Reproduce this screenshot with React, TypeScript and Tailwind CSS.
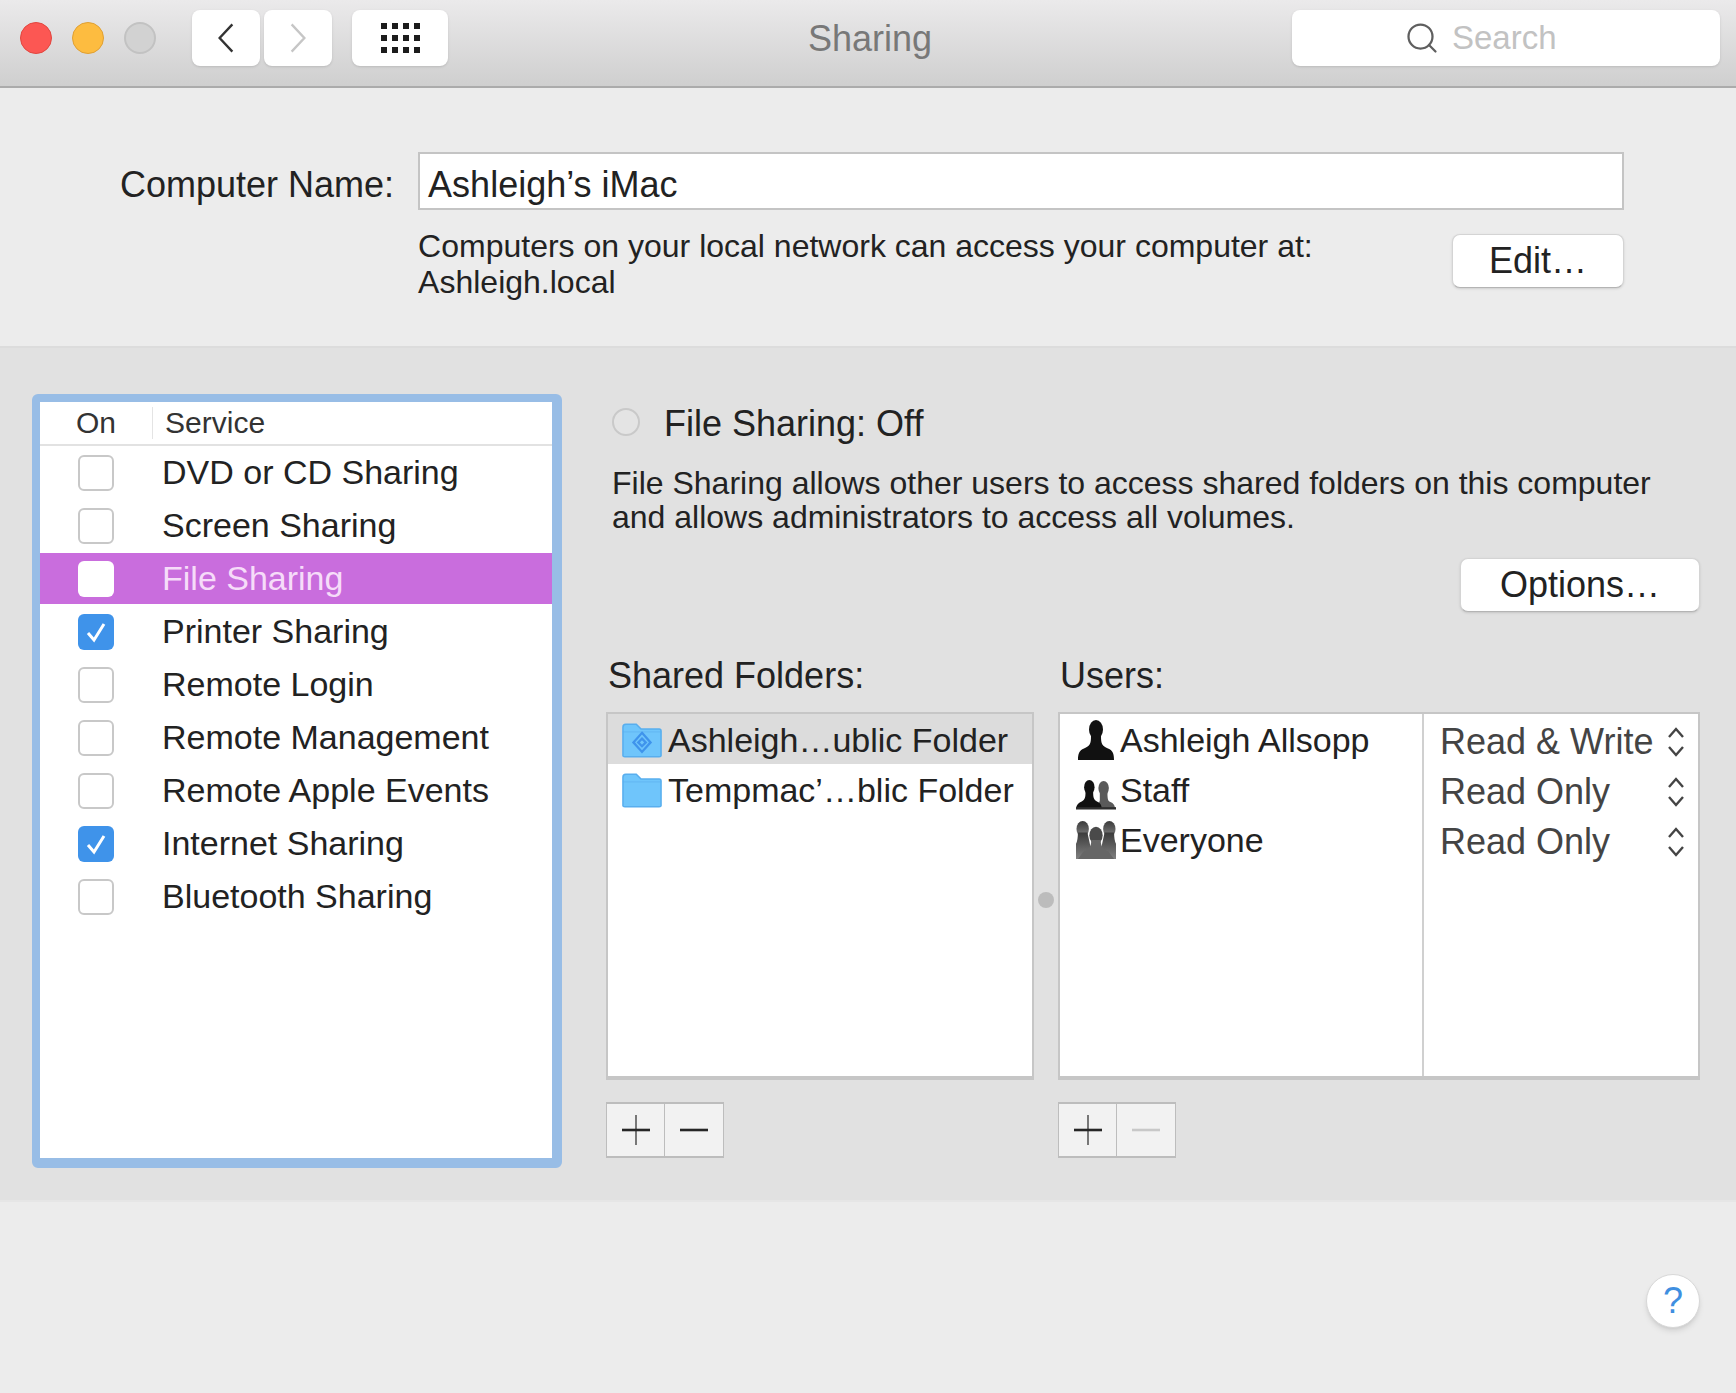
import { Search } from 'lucide-react'

const services = [
  { name: 'DVD or CD Sharing', on: false },
  { name: 'Screen Sharing', on: false },
  { name: 'File Sharing', on: false, selected: true },
  { name: 'Printer Sharing', on: true },
  { name: 'Remote Login', on: false },
  { name: 'Remote Management', on: false },
  { name: 'Remote Apple Events', on: false },
  { name: 'Internet Sharing', on: true },
  { name: 'Bluetooth Sharing', on: false },
]

function Chevron({ dir }: { dir: 'left' | 'right' }) {
  return (
    <svg viewBox="0 0 22 34" className={`h-8 w-5 ${dir === 'left' ? 'text-[#333333]' : 'text-[#c6c6c6]'}`} fill="none" stroke="currentColor" strokeWidth="2.6">
      <polyline points={dir === 'left' ? '18,2 4,17 18,32' : '4,2 18,17 4,32'} />
    </svg>
  )
}

function GridIcon() {
  return (
    <div className="grid grid-cols-4 gap-x-[5px] gap-y-1.5">
      {Array.from({ length: 12 }).map((_, i) => (
        <div key={i} className="size-1.5 bg-[#1c1c1c]" />
      ))}
    </div>
  )
}

function Folder({ shared }: { shared?: boolean }) {
  return (
    <svg viewBox="0 0 42 37" className="h-9 w-10 shrink-0">
      <path d="M1 5 Q1 2 4 2 H15 L20 7 H39 Q41 7 41 9 V35 Q41 36 39 36 H3 Q1 36 1 35 Z" fill="#6fc5fb" stroke="#58aeee" strokeWidth="1.6" />
      <path d="M1 10 H41" stroke="#58aeee" strokeWidth="1" opacity="0.6" />
      {shared && (
        <g fill="none" stroke="#3f94ec" strokeWidth="2.4">
          <path d="M21 11 L30 21 L21 31 L12 21 Z" />
          <path d="M21 17 L25 21 L21 25 L17 21 Z" />
        </g>
      )}
    </svg>
  )
}

function PersonIcon() {
  return (
    <svg viewBox="0 0 40 40" className="size-10 shrink-0" fill="#111111">
      <ellipse cx="20" cy="9.5" rx="7" ry="9.5" />
      <path d="M15 16 C15 24 14 26 8 28.5 C3 30.5 2 34 2 40 H38 C38 34 37 30.5 32 28.5 C26 26 25 24 25 16 Z" />
    </svg>
  )
}

function StaffIcon() {
  return (
    <svg viewBox="0 -3 42 40" className="size-10 shrink-0">
      <g fill="#5a5a5a">
        <ellipse cx="29" cy="15" rx="5.5" ry="7.5" />
        <path d="M25 18 V28 L22 37 H41 C41 32 38 30 35 29 C33.5 28 33 26 33 18 Z" />
      </g>
      <g fill="#111111">
        <ellipse cx="14" cy="14" rx="5.5" ry="7.5" />
        <path d="M10 18 C10 25 9.5 27 6 29 C3 30.5 0.5 32 0 37 H27 C27 32 25 30.5 22 29 C18.5 27 18 25 18 18 Z" />
      </g>
      <rect y="35" width="42" height="2.5" fill="#2e2e2e" />
    </svg>
  )
}

function EveryoneIcon() {
  return (
    <svg viewBox="0 0 42 40" className="size-10 shrink-0">
      <defs>
        <linearGradient id="everyone" x1="0" y1="0" x2="0" y2="1">
          <stop offset="0" stopColor="#3a3a3a" />
          <stop offset="1" stopColor="#808080" />
        </linearGradient>
      </defs>
      <g fill="url(#everyone)">
        <ellipse cx="7" cy="8.5" rx="6.5" ry="8.5" />
        <ellipse cx="35" cy="8.5" rx="6.5" ry="8.5" />
        <path d="M2 12 H12 L15 26 V40 H0 V24 Q2 20 2 12 Z" />
        <path d="M30 12 H40 Q40 20 42 24 V40 H27 V26 Z" />
      </g>
      <ellipse cx="21" cy="15" rx="7" ry="9" fill="#4a4a4a" />
      <path d="M16 20 C16 27 14 29 8 32 L2 40 H40 L34 32 C28 29 26 27 26 20 Z" fill="#666666" />
    </svg>
  )
}

function Updown() {
  return (
    <svg viewBox="0 0 20 32" className="h-8 w-5 text-[#444444]" fill="none" stroke="currentColor" strokeWidth="2.4">
      <polyline points="3,11 10,3 17,11" />
      <polyline points="3,21 10,29 17,21" />
    </svg>
  )
}

function PlusMinus({ minusDisabled }: { minusDisabled?: boolean }) {
  return (
    <div className="flex h-14 w-fit border-x border-y-2 border-[#bdbdbd] bg-[#f2f2f2]">
      <div className="flex w-14.5 items-center justify-center border-r border-[#bdbdbd]">
        <svg viewBox="0 0 30 32" className="h-8 w-7.5" stroke="#262626">
          <path d="M15 1 V31" strokeWidth="1.2" />
          <path d="M1 16 H29" strokeWidth="2.6" />
        </svg>
      </div>
      <div className="flex w-14.5 items-center justify-center">
        <svg viewBox="0 0 30 32" className="h-8 w-7.5" stroke={minusDisabled ? '#c8c8c8' : '#262626'}>
          <path d="M1 16 H29" strokeWidth="2.6" />
        </svg>
      </div>
    </div>
  )
}

function PushButton({ children, className }: { children: string; className: string }) {
  return (
    <div className={`flex h-13.5 items-center justify-center rounded-lg border border-[#d4d4d4] border-b-[#b4b4b4] bg-white text-4xl text-[#222222] shadow-sm ${className}`}>
      {children}
    </div>
  )
}

export default function App() {
  return (
    <div className="flex h-screen flex-col overflow-hidden bg-[#ececec] font-['Liberation_Sans',Arial,sans-serif] text-[#222222]">
      <div className="flex h-22 shrink-0 items-start border-b-2 border-[#ababab] bg-gradient-to-b from-[#ebeaeb] to-[#cfcfcf] pt-2.5 pl-5 pr-4">
        <div className="flex h-14 items-center gap-5">
          <div className="size-8 rounded-full border border-[#e2463f] bg-[#fc5753]" />
          <div className="size-8 rounded-full border border-[#e0a033] bg-[#fdbc40]" />
          <div className="size-8 rounded-full border-2 border-[#c2c2c2] bg-[#d2d2d2]" />
        </div>
        <div className="ml-9 flex gap-1">
          <div className="flex h-14 w-17 items-center justify-center rounded-lg bg-white shadow-sm">
            <Chevron dir="left" />
          </div>
          <div className="flex h-14 w-17 items-center justify-center rounded-lg bg-white shadow-sm">
            <Chevron dir="right" />
          </div>
        </div>
        <div className="ml-5 flex h-14 w-24 items-center justify-center rounded-lg bg-white shadow-sm">
          <GridIcon />
        </div>
        <div className="flex h-14 flex-1 items-center justify-center pt-0.5 text-4xl text-[#787878]">Sharing</div>
        <div className="flex h-14 w-107 items-center gap-3 rounded-lg bg-white pl-28 shadow-sm">
          <Search className="size-9 text-[#5f5f5f]" strokeWidth={1.5} />
          <span className="text-[33px] text-[#c2c2c2]">Search</span>
        </div>
      </div>

      <div className="shrink-0 border-b-2 border-[#dcdcdc] pt-16 pr-28 pb-11.5 pl-30">
        <div className="grid grid-cols-[auto_1fr] gap-x-6">
          <div className="self-center pt-2 text-4xl">Computer Name:</div>
          <div className="flex h-14.5 items-center border-2 border-[#c4c4c4] bg-white px-2 pt-2 text-4xl">Ashleigh’s iMac</div>
          <div className="col-start-2 mt-4.5 flex justify-between">
            <div className="text-[32px] leading-9">
              Computers on your local network can access your computer at:
              <br />
              Ashleigh.local
            </div>
            <PushButton className="mt-1.5 w-43">Edit…</PushButton>
          </div>
        </div>
      </div>

      <div className="flex shrink-0 gap-10 border-b-2 border-[#e6e6e6] bg-[#e1e1e1] pt-11.5 pr-9 pb-8 pl-8">
        <div className="h-[774px] w-[530px] shrink-0 rounded-md border-8 border-r-10 border-b-10 border-[#98bde6] bg-white">
          <div className="flex h-11 items-center border-b-2 border-[#e2e2e2] pl-9 text-3xl text-[#333333]">
            <span>On</span>
            <div className="ml-9 h-8 w-px bg-[#e4e4e4]" />
            <span className="ml-3">Service</span>
          </div>
          {services.map((s) => (
            <div key={s.name} className="h-[53px] py-px">
              <div className={`flex h-full items-center gap-12 pl-9.5 text-[34px] ${s.selected ? 'bg-[#c96ddd] text-[#f6dcf9]' : ''}`}>
                {s.on ? (
                  <div className="flex size-9 items-center justify-center rounded-md bg-[#3f93ea]">
                    <svg viewBox="0 0 24 24" className="size-6" fill="none" stroke="white" strokeWidth="3">
                      <path d="M4 13 L10 20 L20 4" />
                    </svg>
                  </div>
                ) : (
                  <div className={`size-9 rounded-md bg-white ${s.selected ? '' : 'border-2 border-[#c8c8c8]'}`} />
                )}
                <span>{s.name}</span>
              </div>
            </div>
          ))}
        </div>

        <div className="flex min-w-0 flex-1 flex-col pl-1">
          <div className="flex h-14 items-center gap-6 pl-1.5 text-4xl">
            <div className="size-7 rounded-full border-2 border-[#c9c9c9] bg-[#e4e4e4]" />
            <span className="pt-1">File Sharing: Off</span>
          </div>
          <div className="mt-4 pl-1.5 text-[32px] leading-8.5">
            File Sharing allows other users to access shared folders on this computer
            <br />
            and allows administrators to access all volumes.
          </div>
          <PushButton className="mt-6 w-60 self-end">Options…</PushButton>

          <div className="mt-11 grid grid-cols-[428px_24px_1fr]">
            <div className="pl-0.5 text-4xl">Shared Folders:</div>
            <div />
            <div className="pl-0.5 text-4xl">Users:</div>

            <div className="mt-4 h-92 border-x-2 border-t-2 border-b-4 border-[#c6c6c6] bg-white text-[34px]">
              <div className="flex h-12.5 items-center gap-1.5 bg-[#dcdcdc] pt-0.5 pl-3.5">
                <Folder shared />
                <span>Ashleigh…ublic Folder</span>
              </div>
              <div className="flex h-12.5 items-center gap-1.5 pt-0.5 pl-3.5">
                <Folder />
                <span>Tempmac’…blic Folder</span>
              </div>
            </div>
            <div className="mt-4 flex items-center justify-center pt-2">
              <div className="size-4 rounded-full bg-[#bcbcbc]" />
            </div>
            <div className="mt-4 flex h-92 border-x-2 border-t-2 border-b-4 border-[#c6c6c6] bg-white">
              <div className="w-91 border-r-2 border-[#d0d0d0] text-[34px]">
                <div className="flex h-12.5 items-center gap-1 pt-0.5 pl-4">
                  <PersonIcon />
                  <span>Ashleigh Allsopp</span>
                </div>
                <div className="flex h-12.5 items-center gap-1 pt-0.5 pl-4">
                  <StaffIcon />
                  <span>Staff</span>
                </div>
                <div className="flex h-12.5 items-center gap-1 pt-0.5 pl-4">
                  <EveryoneIcon />
                  <span>Everyone</span>
                </div>
              </div>
              <div className="flex-1 text-4xl text-[#444444]">
                <div className="flex h-12.5 items-center justify-between pt-1.5 pr-3 pl-4">
                  <span>Read &amp; Write</span>
                  <Updown />
                </div>
                <div className="flex h-12.5 items-center justify-between pt-1.5 pr-3 pl-4">
                  <span>Read Only</span>
                  <Updown />
                </div>
                <div className="flex h-12.5 items-center justify-between pt-1.5 pr-3 pl-4">
                  <span>Read Only</span>
                  <Updown />
                </div>
              </div>
            </div>

            <div className="mt-5.5">
              <PlusMinus />
            </div>
            <div />
            <div className="mt-5.5">
              <PlusMinus minusDisabled />
            </div>
          </div>
        </div>
      </div>

      <div className="flex flex-1 items-start justify-end pt-18 pr-9">
        <div className="flex size-13.5 items-center justify-center rounded-full border border-[#d8d8d8] bg-white text-4xl text-[#3f8fe0] shadow-md">
          ?
        </div>
      </div>
    </div>
  )
}
